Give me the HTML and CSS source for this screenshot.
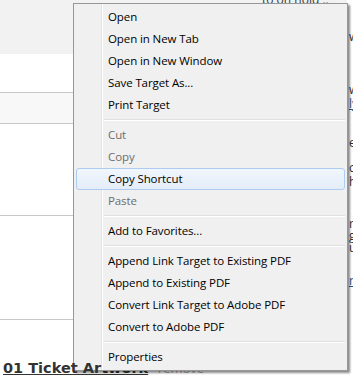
FILE: index.html
```html
<!DOCTYPE html>
<html lang="en">

<head>
    <meta charset="UTF-8" />
    <title>Context menu</title>
    <link rel="stylesheet" href="styles.css">
</head>

<body>
    <div class="page">
        <div class="main">
            <div class="top-bar">
                <span class="top-note">to on hold ..</span>
            </div>
            <div class="row row-a"></div>
            <div class="row row-b"></div>
            <div class="row row-c"></div>
            <div class="row row-d"></div>
            <div class="bottom">
                <a class="ticket" href="#"><span class="ticket-front">01 Ticket Ar</span>twork</a>
                <span class="remove">remove</span>
            </div>
        </div>
        <div class="side">
            <div class="s1">w</div>
            <div class="s2">w</div>
            <div class="s3 link">ly</div>
            <div class="s4">e</div>
            <div class="s5">c</div>
            <div>h</div>
            <div class="s6">r</div>
            <div class="s7">g</div>
            <div class="s7">u</div>
            <div class="s8 link">n</div>
        </div>
    </div>

    <div class="menu">
        <div class="item">Open</div>
        <div class="item">Open in New Tab</div>
        <div class="item">Open in New Window</div>
        <div class="item">Save Target As...</div>
        <div class="item">Print Target</div>
        <div class="sep"></div>
        <div class="item disabled">Cut</div>
        <div class="item disabled">Copy</div>
        <div class="item hover">Copy Shortcut</div>
        <div class="item disabled">Paste</div>
        <div class="sep"></div>
        <div class="item">Add to Favorites...</div>
        <div class="sep"></div>
        <div class="item">Append Link Target to Existing PDF</div>
        <div class="item">Append to Existing PDF</div>
        <div class="item">Convert Link Target to Adobe PDF</div>
        <div class="item">Convert to Adobe PDF</div>
        <div class="sep"></div>
        <div class="item">Properties</div>
    </div>
</body>

</html>
```

FILE: styles.css
```css
body,
html {
    margin: 0;
    padding: 0;
    height: 100%;
    overflow: hidden;
    font-family: 'Segoe UI', 'Open Sans', sans-serif;
    background: #fff;
}

.page {
    display: flex;
    height: 378px;
}

.main {
    width: 347px;
    flex: none;
    display: flex;
    flex-direction: column;
}

.top-bar {
    height: 54px;
    background: #f2f2f2;
    overflow: hidden;
}

.top-note {
    display: block;
    margin-left: 262px;
    margin-top: -9px;
    font-size: 12px;
    color: #333;
    text-decoration: underline;
}

.row {
    border-bottom: 1px solid #c8c8c8;
}

.row-a {
    height: 38px;
}

.row-b {
    height: 30px;
    background: #f8f8f8;
}

.row-c {
    height: 91px;
}

.row-d {
    height: 103px;
}

.bottom {
    padding: 40px 0 0 3px;
    font-family: 'DejaVu Sans', Verdana, sans-serif;
    font-size: 14.5px;
    line-height: 16px;
    white-space: nowrap;
}

.ticket {
    color: #333;
    font-weight: bold;
}

.ticket-front {
    position: relative;
    z-index: 2;
}

.remove {
    color: #aaa;
    font-family: 'Open Sans', sans-serif;
    font-size: 13px;
    margin-left: 5px;
}

.side {
    flex: 1;
    padding-left: 2px;
    font-family: 'Open Sans', sans-serif;
    font-size: 12px;
    line-height: 14px;
    color: #333;
}

.side .link {
    color: #1f5c99;
    text-decoration: underline;
}

.s1 { margin-top: 30px; }
.s2 { margin-top: 39px; }
.s4 { margin-top: 25px; }
.s5 { margin-top: 11px; }
.s6 { margin-top: 29px; line-height: 12px; }
.s7 { line-height: 12px; }
.s8 { margin-top: 21px; line-height: 12px; }

/* context menu over the page */
.menu {
    position: absolute;
    left: 73px;
    top: 3px;
    width: 269px;
    padding: 2px;
    border: 1px solid #979797;
    background-color: #f0f0f0;
    background-image: linear-gradient(to right, transparent 27px, #e2e3e3 27px, #e2e3e3 28px, #fff 28px, #fff 29px, transparent 29px);
    box-shadow: 2px 2px 2px rgba(0, 0, 0, 0.45);
    font-size: 11.5px;
    letter-spacing: -0.1px;
    color: #000;
    z-index: 1;
}

.item {
    height: 20px;
    line-height: 20px;
    padding-left: 31px;
    border: 1px solid transparent;
    border-radius: 3px;
    white-space: nowrap;
}

.item.disabled {
    color: #6d6d6d;
}

.item.hover {
    border-color: #aeccef;
    background: linear-gradient(#f1f6fd, #e4edf8);
}

.sep {
    height: 8px;
    margin-left: 28px;
    background: linear-gradient(transparent 3px, #e0e0e0 3px, #e0e0e0 4px, #fff 4px, #fff 5px, transparent 5px);
}
```
